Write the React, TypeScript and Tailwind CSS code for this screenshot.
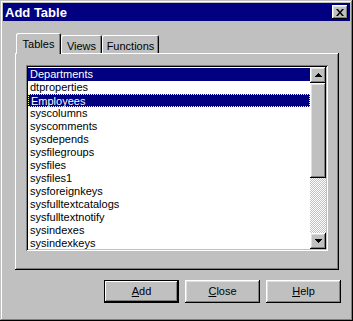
import React from "react";

const tables = [
  "Departments",
  "dtproperties",
  "Employees",
  "syscolumns",
  "syscomments",
  "sysdepends",
  "sysfilegroups",
  "sysfiles",
  "sysfiles1",
  "sysforeignkeys",
  "sysfulltextcatalogs",
  "sysfulltextnotify",
  "sysindexes",
  "sysindexkeys",
];

const selected = ["Departments", "Employees"];

// classic raised bevel
const raised =
  "bg-[#c0c0c0] shadow-[inset_-1px_-1px_#000,inset_1px_1px_#fff,inset_-2px_-2px_#808080,inset_2px_2px_#dfdfdf]";

function Arrow({ up }: { up?: boolean }) {
  return (
    <svg width="7" height="4" viewBox="0 0 7 4" className="block">
      {up ? (
        <path d="M3 0h1v1h1v1h1v1h1v1H0V3h1V2h1V1h1z" fill="#000" />
      ) : (
        <path d="M0 0h7v1H6v1H5v1H4v1H3V3H2V2H1V1H0z" fill="#000" />
      )}
    </svg>
  );
}

function Button({ label, hot, isDefault }: { label: string; hot: string; isDefault?: boolean }) {
  const rest = label.slice(1);
  return (
    <div
      className={
        "w-[75px] h-[23px] flex items-center justify-center text-[11px] text-black " +
        (isDefault
          ? "bg-[#c0c0c0] shadow-[inset_0_0_0_1px_#000,inset_-2px_-2px_#000,inset_2px_2px_#fff,inset_-3px_-3px_#808080]"
          : raised)
      }
    >
      <span>
        <span className="underline underline-offset-1">{hot}</span>
        {rest}
      </span>
    </div>
  );
}

export default function App() {
  return (
    <div
      className="w-[353px] h-[321px] bg-[#c0c0c0] flex flex-col p-[3px] shadow-[inset_-1px_-1px_#000,inset_1px_1px_#c0c0c0,inset_-2px_-2px_#808080,inset_2px_2px_#fff]"
      style={{ fontFamily: '"Liberation Sans", Arial, sans-serif' }}
    >
      {/* title bar */}
      <div className="h-[18px] bg-[#000080] flex items-center justify-between pl-[2px] pr-[2px]">
        <span className="text-white font-bold text-[13px] leading-none">Add Table</span>
        <div className={"w-[16px] h-[14px] flex items-center justify-center " + raised}>
          <svg width="8" height="7" viewBox="0 0 8 7" className="block">
            <path d="M0 0h2l2 2.5L6 0h2L5 3.5 8 7H6L4 4.5 2 7H0l3-3.5z" fill="#000" />
          </svg>
        </div>
      </div>

      <div className="flex flex-col pl-[12px] pr-[11px] pt-[12px]">
        {/* tabs */}
        <div className="flex items-end h-[20px] text-[11px] text-black">
          <div className="relative z-10 ml-[1px] w-[45px] h-[21px] -mb-px bg-[#c0c0c0] rounded-tl-[2px] rounded-tr-[2px] shadow-[inset_1px_1px_#fff,inset_-1px_0_#000,inset_-2px_0_#808080] flex justify-center pt-[3px]">
            Tables
          </div>
          <div className="w-[41px] h-[18px] rounded-tl-[2px] rounded-tr-[2px] shadow-[inset_1px_1px_#fff,inset_-1px_0_#000,inset_-2px_0_#808080] flex justify-center pt-[3px]">
            Views
          </div>
          <div className="w-[57px] h-[18px] rounded-tl-[2px] rounded-tr-[2px] shadow-[inset_1px_1px_#fff,inset_-1px_0_#000,inset_-2px_0_#808080] flex justify-center pt-[3px]">
            Functions
          </div>
        </div>

        {/* tab panel */}
        <div className="h-[217px] pt-[12px] px-[11px] shadow-[inset_-1px_-1px_#000,inset_1px_1px_#fff,inset_-2px_-2px_#808080]">
          <div className="h-[186px] p-[2px] bg-white flex shadow-[inset_1px_1px_#808080,inset_-1px_-1px_#fff,inset_2px_2px_#000,inset_-2px_-2px_#c0c0c0]">
            <div className="flex-1 flex flex-col overflow-hidden text-[11px] text-black pt-[1px]">
              {tables.map((t) => {
                const sel = selected.includes(t);
                return (
                  <div
                    key={t}
                    className={
                      "h-[13px] shrink-0 leading-[13px] pl-[2px] whitespace-nowrap " +
                      (sel ? "bg-[#000080] text-white " : "") +
                      (t === "Employees" ? "border border-dotted border-[#ffff80] leading-[11px] pl-[1px]" : "")
                    }
                  >
                    {t}
                  </div>
                );
              })}
            </div>
            <div className="w-[16px] flex flex-col">
              <div className={"h-[16px] flex items-center justify-center " + raised}>
                <Arrow up />
              </div>
              <div className={"h-[95px] " + raised} />
              <div className="flex-1 bg-[repeating-conic-gradient(#c0c0c0_0%_25%,#fff_0%_50%)] bg-[length:2px_2px]" />
              <div className={"h-[16px] flex items-center justify-center " + raised}>
                <Arrow />
              </div>
            </div>
          </div>
        </div>

        {/* buttons */}
        <div className="flex justify-end gap-[6px] mt-[10px] -mr-[2px]">
          <Button label="Add" hot="A" isDefault />
          <Button label="Close" hot="C" />
          <Button label="Help" hot="H" />
        </div>
      </div>
    </div>
  );
}
